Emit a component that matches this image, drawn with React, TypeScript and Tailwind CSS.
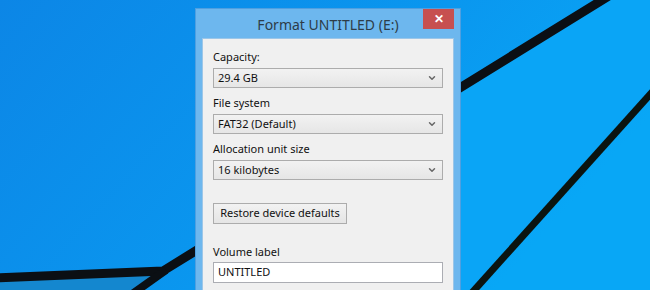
import { ChevronDown } from 'lucide-react';

const font = { fontFamily: '"Noto Sans", "Open Sans", sans-serif' };

const Wallpaper = () => (
    <svg className="absolute inset-0" width="650" height="290" viewBox="0 0 650 290">
        <defs>
            <linearGradient id="sky" x1="0" y1="0" x2="1" y2="0.4">
                <stop offset="0" stopColor="#0c86e6" />
                <stop offset="0.6" stopColor="#0a97ef" />
                <stop offset="1" stopColor="#08a7f6" />
            </linearGradient>
        </defs>
        <rect width="650" height="290" fill="url(#sky)" />
        {/* lighter pane between the two diagonals */}
        <polygon points="460,88 603,0 650,0 650,95 474,290 460,290" fill="#0aa5f6" />
        <polygon points="0,277 163,271 140,290 0,290" fill="#1487cf" />
        <polyline points="-5,278 163,271 612,-6" fill="none" stroke="#0b0f14" strokeWidth="9" strokeLinejoin="round" />
        <line x1="128" y1="297" x2="166" y2="270" stroke="#0b0f14" strokeWidth="8" />
        <line x1="469" y1="296" x2="655" y2="89" stroke="#0b1410" strokeWidth="7" />
    </svg>
);

const Select = ({ value }: { value: string }) => (
    <div className="flex items-center justify-between h-[20px] pl-[4px] pr-[5px] border border-[#acacac] bg-gradient-to-b from-[#f2f2f2] to-[#e6e6e6] text-[11px] text-[#111]">
        <span>{value}</span>
        <ChevronDown className="w-[10px] h-[10px] text-[#666]" strokeWidth={3.5} />
    </div>
);

const Field = ({ label, value }: { label: string; value: string }) => (
    <div className="flex flex-col">
        <span className="h-[16px] leading-[16px] text-[11px] text-[#111]">{label}</span>
        <div className="mt-[3px]">
            <Select value={value} />
        </div>
    </div>
);

export default function App() {
    return (
        <div className="relative w-[650px] h-[290px] overflow-hidden" style={font}>
            <Wallpaper />

            <div className="absolute left-[195px] top-[8px] w-[266px] h-[300px] bg-[#6db7ee] border border-[#4f9fe0] flex flex-col">
                <div className="relative h-[29px] flex items-center justify-center">
                    <span className="text-[14px] text-[#2d3c48] pt-[1px]">Format UNTITLED (E:)</span>
                    <div className="absolute right-[6px] top-0 w-[31px] h-[20px] bg-[#c75050] flex items-center justify-center">
                        <span className="text-white text-[12px] font-bold leading-none">✕</span>
                    </div>
                </div>

                <div className="mx-[6px] flex-1 bg-[#f0f0f0] border border-[#9cc6e8] pt-[10px] pl-[10px] pr-[10px]">
                    <div className="flex flex-col gap-[7px]">
                        <Field label="Capacity:" value="29.4 GB" />
                        <Field label="File system" value="FAT32 (Default)" />
                        <Field label="Allocation unit size" value="16 kilobytes" />
                    </div>

                    <button className="mt-[23px] w-[134px] h-[21px] border border-[#acacac] bg-gradient-to-b from-[#f2f2f2] to-[#e5e5e5] text-[11px] text-[#111]">
                        Restore device defaults
                    </button>

                    <div className="mt-[20px] flex flex-col">
                        <span className="h-[16px] leading-[16px] text-[11px] text-[#111]">Volume label</span>
                        <div className="mt-[2px] h-[21px] border border-[#abadb3] bg-white pl-[4px] flex items-center text-[11px] text-[#111]">
                            UNTITLED
                        </div>
                    </div>
                </div>
            </div>
        </div>
    );
}
